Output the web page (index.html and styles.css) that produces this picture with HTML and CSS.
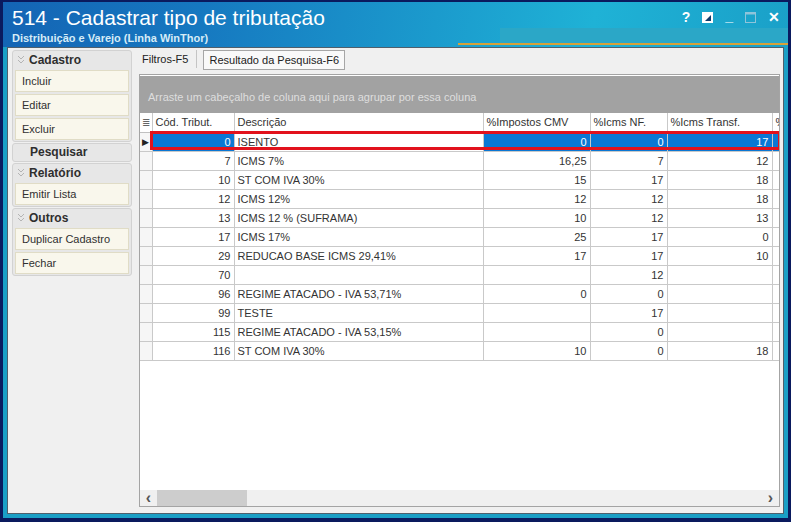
FILE: index.html
```html
<!DOCTYPE html>
<html lang="pt-BR">
<head>
  <meta charset="UTF-8" />
  <title>514 - Cadastrar tipo de tributação</title>
  <link rel="stylesheet" href="styles.css">
</head>
<body>
  <div class="window">
    <div class="titlebar">
      <div class="titles">
        <div class="title">514 - Cadastrar tipo de tributação</div>
        <div class="subtitle">Distribuição e Varejo (Linha WinThor)</div>
      </div>
      <div class="controls">
        <span class="ctl">?</span>
        <svg class="ctl-icon" width="11" height="11" viewBox="0 0 11 11"><rect x="0" y="0" width="11" height="11" fill="#fff"/><polygon points="3,9 9,3 9,9" fill="#123a6a"/></svg>
        <span class="ctl min">_</span>
        <svg class="ctl-icon" width="11" height="11" viewBox="0 0 11 11"><rect x="0.5" y="0.5" width="10" height="10" fill="none" stroke="#8fc4da"/><rect x="0.5" y="0.5" width="10" height="2" fill="#8fc4da"/></svg>
        <span class="ctl close">✕</span>
      </div>
    </div>

    <div class="client">
      <aside class="side">
        <div class="panel">
          <div class="panel-head"><svg class="chev" width="8" height="9" viewBox="0 0 8 9"><path d="M1 1 L4 4 L7 1 M1 5 L4 8 L7 5" fill="none" stroke="#b4b4b4"/></svg>Cadastro</div>
          <div class="btn">Incluir</div>
          <div class="btn">Editar</div>
          <div class="btn">Excluir</div>
        </div>
        <div class="panel">
          <div class="panel-head plain">Pesquisar</div>
        </div>
        <div class="panel">
          <div class="panel-head"><svg class="chev" width="8" height="9" viewBox="0 0 8 9"><path d="M1 1 L4 4 L7 1 M1 5 L4 8 L7 5" fill="none" stroke="#b4b4b4"/></svg>Relatório</div>
          <div class="btn">Emitir Lista</div>
        </div>
        <div class="panel">
          <div class="panel-head"><svg class="chev" width="8" height="9" viewBox="0 0 8 9"><path d="M1 1 L4 4 L7 1 M1 5 L4 8 L7 5" fill="none" stroke="#b4b4b4"/></svg>Outros</div>
          <div class="btn">Duplicar Cadastro</div>
          <div class="btn">Fechar</div>
        </div>
      </aside>

      <main class="main">
        <div class="tabs">
          <div class="tab">Filtros-F5</div>
          <div class="tab-sep"></div>
          <div class="tab active">Resultado da Pesquisa-F6</div>
        </div>

        <div class="grid">
          <div class="group-panel">Arraste um cabeçalho de coluna aqui para agrupar por essa coluna</div>
          <div class="grid-body">
            <table class="data">
              <colgroup>
                <col class="c-ind"><col class="c-cod"><col class="c-desc"><col class="c-imp"><col class="c-nf"><col class="c-tr"><col class="c-last">
              </colgroup>
              <thead>
                <tr>
                  <th class="ind">≣</th>
                  <th>Cód. Tribut.</th>
                  <th>Descrição</th>
                  <th>%Impostos CMV</th>
                  <th>%Icms NF.</th>
                  <th>%Icms Transf.</th>
                  <th>%</th>
                </tr>
              </thead>
              <tbody>
                <tr class="sel"><td class="ind">▶</td><td class="num hl">0</td><td>ISENTO</td><td class="num hl">0</td><td class="num hl">0</td><td class="num hl">17</td><td class="hl"></td></tr>
                <tr><td class="ind"></td><td class="num">7</td><td>ICMS 7%</td><td class="num">16,25</td><td class="num">7</td><td class="num">12</td><td></td></tr>
                <tr><td class="ind"></td><td class="num">10</td><td>ST COM IVA 30%</td><td class="num">15</td><td class="num">17</td><td class="num">18</td><td></td></tr>
                <tr><td class="ind"></td><td class="num">12</td><td>ICMS 12%</td><td class="num">12</td><td class="num">12</td><td class="num">18</td><td></td></tr>
                <tr><td class="ind"></td><td class="num">13</td><td>ICMS 12 % (SUFRAMA)</td><td class="num">10</td><td class="num">12</td><td class="num">13</td><td></td></tr>
                <tr><td class="ind"></td><td class="num">17</td><td>ICMS 17%</td><td class="num">25</td><td class="num">17</td><td class="num">0</td><td></td></tr>
                <tr><td class="ind"></td><td class="num">29</td><td>REDUCAO BASE ICMS 29,41%</td><td class="num">17</td><td class="num">17</td><td class="num">10</td><td></td></tr>
                <tr><td class="ind"></td><td class="num">70</td><td></td><td class="num"></td><td class="num">12</td><td class="num"></td><td></td></tr>
                <tr><td class="ind"></td><td class="num">96</td><td>REGIME ATACADO - IVA 53,71%</td><td class="num">0</td><td class="num">0</td><td class="num"></td><td></td></tr>
                <tr><td class="ind"></td><td class="num">99</td><td>TESTE</td><td class="num"></td><td class="num">17</td><td class="num"></td><td></td></tr>
                <tr><td class="ind"></td><td class="num">115</td><td>REGIME ATACADO - IVA 53,15%</td><td class="num"></td><td class="num">0</td><td class="num"></td><td></td></tr>
                <tr><td class="ind"></td><td class="num">116</td><td>ST COM IVA 30%</td><td class="num">10</td><td class="num">0</td><td class="num">18</td><td></td></tr>
              </tbody>
            </table>
            <div class="sel-mark"></div>
          </div>
          <div class="hscroll">
            <span class="arrow">‹</span>
            <div class="track"><div class="thumb"></div></div>
            <span class="arrow">›</span>
          </div>
        </div>
      </main>
    </div>
  </div>
</body>
</html>
```

FILE: styles.css
```css
* { box-sizing: border-box; }
body { margin: 0; background: #0a1a5e; font-family: 'Liberation Sans', Arial, sans-serif; font-size: 11px; color: #333; }

.window { width: 791px; height: 522px; border: solid #0a1a5e; border-width: 2px 3px 4px 3px; background: #1a9fc6; padding: 0 4px 4px 4px; display: flex; flex-direction: column; }

.titlebar { height: 45px; margin: 0 -4px; padding: 0 8px 0 9px; display: flex; justify-content: space-between; align-items: flex-start;
  background:
    linear-gradient(#d6a139, #d6a139) 455px 41px / 330px 2px no-repeat,
    linear-gradient(#2ba7c7, #2ba7c7) 497px 26px / 288px 15px no-repeat,
    linear-gradient(100deg, #1464b4 0%, #1678c0 25%, #1b9bcd 55%, #1fb2d6 75%, #1aa0c8 100%); }
.title { color: #fff; font-size: 21px; line-height: 22px; margin-top: 5px; }
.subtitle { color: #d6ecf7; font-weight: bold; font-size: 11px; line-height: 13px; margin-top: 3px; }
.controls { display: flex; align-items: center; gap: 12px; margin-top: 8px; color: #fff; }
.ctl { font-weight: bold; font-size: 14px; line-height: 14px; }
.ctl.min { margin-top: -2px; }
.ctl.close { font-size: 14px; }

.client { flex: 1; background: #f0f0f0; border: 1px solid #4f5f6c; display: flex; }

.side { flex: none; width: 120px; margin-left: 4px; padding-top: 2px; display: flex; flex-direction: column; gap: 1px; }
.panel { border: 1px solid #d2d2d2; border-radius: 3px; background: #e7e7e7; padding: 0 2px 1px; display: flex; flex-direction: column; gap: 2px; }
.panel-head { height: 17px; display: flex; align-items: center; gap: 4px; padding-left: 2px; font-weight: bold; font-size: 12px; color: #2e2e2e; }
.panel-head.plain { padding-left: 15px; height: 16px; }
.btn { height: 22px; line-height: 20px; padding-left: 6px; background: #f9f7ec; border: 1px solid #e0dcc6; color: #303030; white-space: nowrap; }

.main { flex: 1; min-width: 0; margin-left: 7px; margin-right: 3px; margin-bottom: 6px; display: flex; flex-direction: column; }
.tabs { height: 26px; display: flex; align-items: flex-start; padding-top: 2px; }
.tab { height: 20px; line-height: 18px; padding-left: 3px; color: #222; white-space: nowrap; }
.tab-sep { width: 1px; height: 18px; background: #c4c4c4; margin: 0 6px 0 8px; }
.tab.active { padding: 0 5px 0 5px; background: #f9f9f9; border: 1px solid #a6a6a6; }

.grid { flex: 1; border: 1px solid #a4a4a4; background: #fff; display: flex; flex-direction: column; overflow: hidden; }
.group-panel { height: 37px; margin-top: 1px; background: #a2a2a2; color: #dedede; padding: 15px 0 0 8px; white-space: nowrap; }
.grid-body { flex: 1; position: relative; overflow: hidden; }

.data { border-collapse: collapse; table-layout: fixed; width: 660px; }
.c-ind { width: 12px; } .c-cod { width: 82px; } .c-desc { width: 249px; } .c-imp { width: 107px; } .c-nf { width: 77px; } .c-tr { width: 105px; } .c-last { width: 28px; }
.data th, .data td { height: 19px; padding: 0 3px; border: 1px solid #c9c9c9; white-space: nowrap; overflow: hidden; color: #333; }
.data th { text-align: left; font-weight: normal; border-top: none; border-bottom-color: #c0c0c0; }
.data th:first-child, .data td:first-child { border-left: none; }
.data .ind { padding: 0; text-align: center; font-size: 9px; background: #f6f6f6; color: #222; }
.data th.ind { background: #fff; font-size: 10px; color: #666; }
.data .num { text-align: right; }
.data .hl { background: #0a78d4; color: #fff; }
.sel-mark { position: absolute; left: 10px; top: 18px; width: 631px; height: 19px; border: 3px solid #e2121c; }

.hscroll { height: 16px; background: #f0f0f0; display: flex; align-items: center; }
.arrow { width: 17px; text-align: center; font-size: 16px; font-weight: bold; color: #555; line-height: 14px; }
.track { flex: 1; height: 16px; }
.thumb { width: 90px; height: 16px; background: #cdcdcd; }
```
